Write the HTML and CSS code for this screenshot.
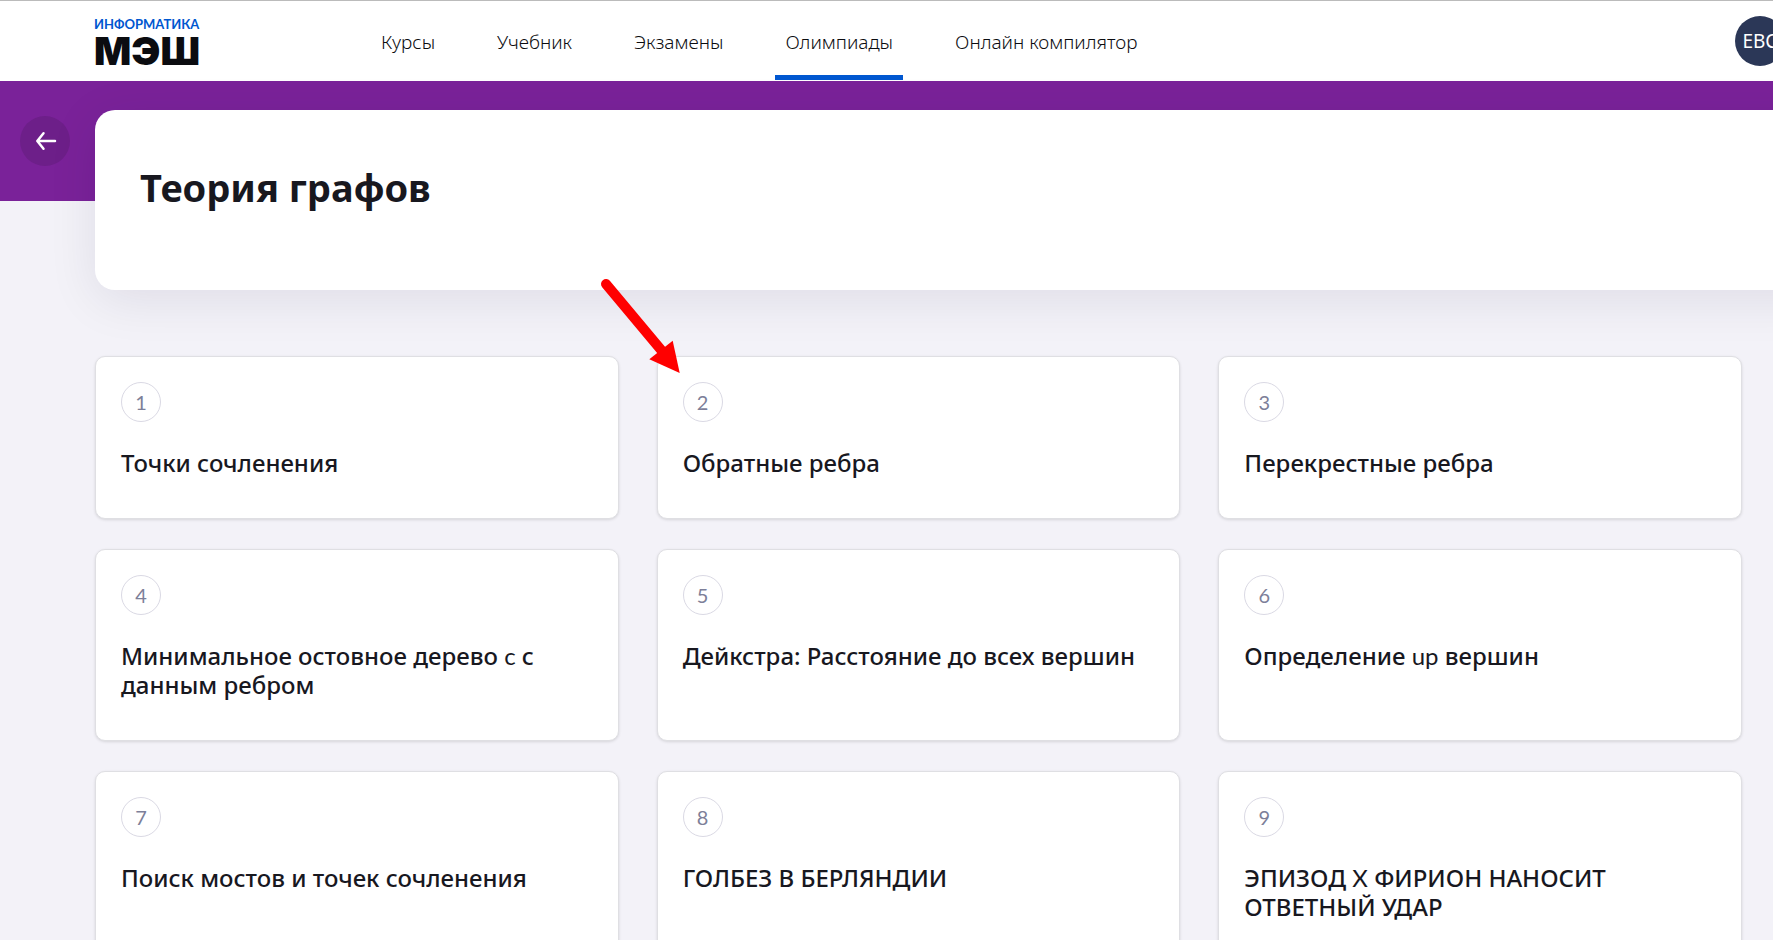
FILE: index.html
```html
<!DOCTYPE html>
<html lang="ru">
<head>
<meta charset="utf-8">
<meta name="viewport" content="width=device-width, initial-scale=1">
<title>Теория графов</title>
<link rel="stylesheet" href="styles.css">
</head>
<body>
<div class="page">
  <header class="header">
    <a class="logo" href="#"><span class="logo-sub">ИНФОРМАТИКА</span><span class="logo-main">МЭШ</span></a>
    <nav class="nav">
      <a class="nav-link" href="#">Курсы</a>
      <a class="nav-link" href="#">Учебник</a>
      <a class="nav-link" href="#">Экзамены</a>
      <a class="nav-link nav-link-active" href="#" aria-current="page">Олимпиады</a>
      <a class="nav-link" href="#">Онлайн компилятор</a>
    </nav>
    <button class="avatar" type="button">ЕВС</button>
  </header>
  <main>
    <section class="hero">
      <button class="back" type="button" aria-label="Назад">
        <svg width="24" height="24" viewBox="0 0 24 24" fill="none" stroke="#fff" stroke-width="2.500" stroke-linecap="round" stroke-linejoin="round"><path d="M22 12H4.500M10.500 4.300L4.300 12l6.200 7.700"/></svg>
      </button>
      <div class="hero-card"><h1 class="title">Теория графов</h1></div>
    </section>
    <ol class="grid">
      <li><a class="card" href="#"><span class="num">1</span><span class="name">Точки сочленения</span></a></li>
      <li><a class="card" href="#"><span class="num">2</span><span class="name">Обратные ребра</span></a></li>
      <li><a class="card" href="#"><span class="num">3</span><span class="name">Перекрестные ребра</span></a></li>
      <li><a class="card" href="#"><span class="num">4</span><span class="name">Минимальное остовное дерево <span class="latin">c</span> с данным ребром</span></a></li>
      <li><a class="card" href="#"><span class="num">5</span><span class="name">Дейкстра: Расстояние до всех вершин</span></a></li>
      <li><a class="card" href="#"><span class="num">6</span><span class="name">Определение <span class="latin">up</span> вершин</span></a></li>
      <li><a class="card" href="#"><span class="num">7</span><span class="name">Поиск мостов и точек сочленения</span></a></li>
      <li><a class="card" href="#"><span class="num">8</span><span class="name">ГОЛБЕЗ В БЕРЛЯНДИИ</span></a></li>
      <li><a class="card" href="#"><span class="num">9</span><span class="name">ЭПИЗОД <span class="latin">X</span> ФИРИОН НАНОСИТ ОТВЕТНЫЙ УДАР</span></a></li>
    </ol>
  </main>
  <svg class="pointer" width="90" height="104" viewBox="0 0 90 104" aria-hidden="true"><path d="M16 14L72 81" stroke="#f00" stroke-width="10" stroke-linecap="round"/><path d="M82.700 70.700L59.300 89.300L89.700 103Z" fill="#f00"/></svg>
</div>
</body>
</html>
```
FILE: styles.css
```css
* { box-sizing: border-box; }
body {
  margin: 0;
  background: #f3f2f8;
  color: #18181f;
  font-family: "Noto Sans", "Open Sans", sans-serif;
}
a { color: inherit; text-decoration: none; }
button { border: 0; padding: 0; font: inherit; cursor: pointer; }
.page { position: relative; height: 100vh; overflow: hidden; }
.header {
  display: flex;
  align-items: stretch;
  height: 81px;
  padding-left: 94px;
  border-top: 1px solid #bbb;
  background: #fff;
}
.logo {
  display: flex;
  flex-direction: column;
  width: 277px;
  padding-top: 15px;
}
.logo-sub {
  color: #0057d0;
  font-family: Lato, sans-serif;
  font-size: 13px;
  font-weight: 700;
  line-height: 16px;
}
.logo-main {
  color: #0b0c10;
  font-family: Inter, sans-serif;
  font-size: 39px;
  font-weight: 900;
  line-height: 38px;
}
.nav { display: flex; gap: 42px; }
.nav-link {
  padding: 28px 10px 0;
  border-bottom: 5px solid transparent;
  margin-bottom: 1px;
  color: #0b0c10;
  font-size: 19px;
  font-weight: 300;
  line-height: 26px;
}
.nav-link-active { border-color: #0057d0; }
.avatar {
  flex: none;
  width: 50px;
  height: 50px;
  margin: 15px -12px 0 auto;
  border-radius: 50%;
  background: #2b3757;
  color: #fff;
  font-size: 19px;
  font-weight: 400;
}
.hero {
  display: flex;
  padding: 29px 0 0 20px;
  background: linear-gradient(#7a2299, #7a2299) top / 100% 120px no-repeat;
}
.back {
  display: grid;
  place-items: center;
  flex: none;
  width: 50px;
  height: 50px;
  margin: 6px 25px 0 0;
  border-radius: 50%;
  background: #6d1f89;
}
.hero-card {
  flex: 1;
  min-height: 180px;
  margin-right: -64px;
  padding: 51px 45px;
  border-radius: 20px;
  background: #fff;
  box-shadow: 0 10px 50px rgba(20, 10, 60, 0.09);
}
.title { margin: 0; font-size: 38px; font-weight: 700; line-height: 52px; }
.grid {
  display: grid;
  grid-template-columns: repeat(3, 1fr);
  gap: 30px 38px;
  margin: 66px 31px 0 95px;
  padding: 0;
  list-style: none;
}
.card {
  display: flex;
  flex-direction: column;
  align-items: flex-start;
  gap: 26px;
  height: 100%;
  padding: 25px 25px 41px;
  border: 1px solid #dfdfe3;
  border-radius: 10px;
  background: #fff;
  box-shadow: 0 1px 3px rgba(0, 0, 0, 0.12);
}
.num {
  display: grid;
  place-items: center;
  width: 40px;
  height: 40px;
  border: 1px solid #dad9e4;
  border-radius: 50%;
  color: #7d7f99;
  font-family: Lato, sans-serif;
  font-size: 20px;
}
.name { font-size: 24px; font-weight: 500; line-height: 29px; }
.latin { font-family: Lato, sans-serif; font-weight: 400; line-height: 1; }
.pointer { position: absolute; top: 270px; left: 590px; }
```
